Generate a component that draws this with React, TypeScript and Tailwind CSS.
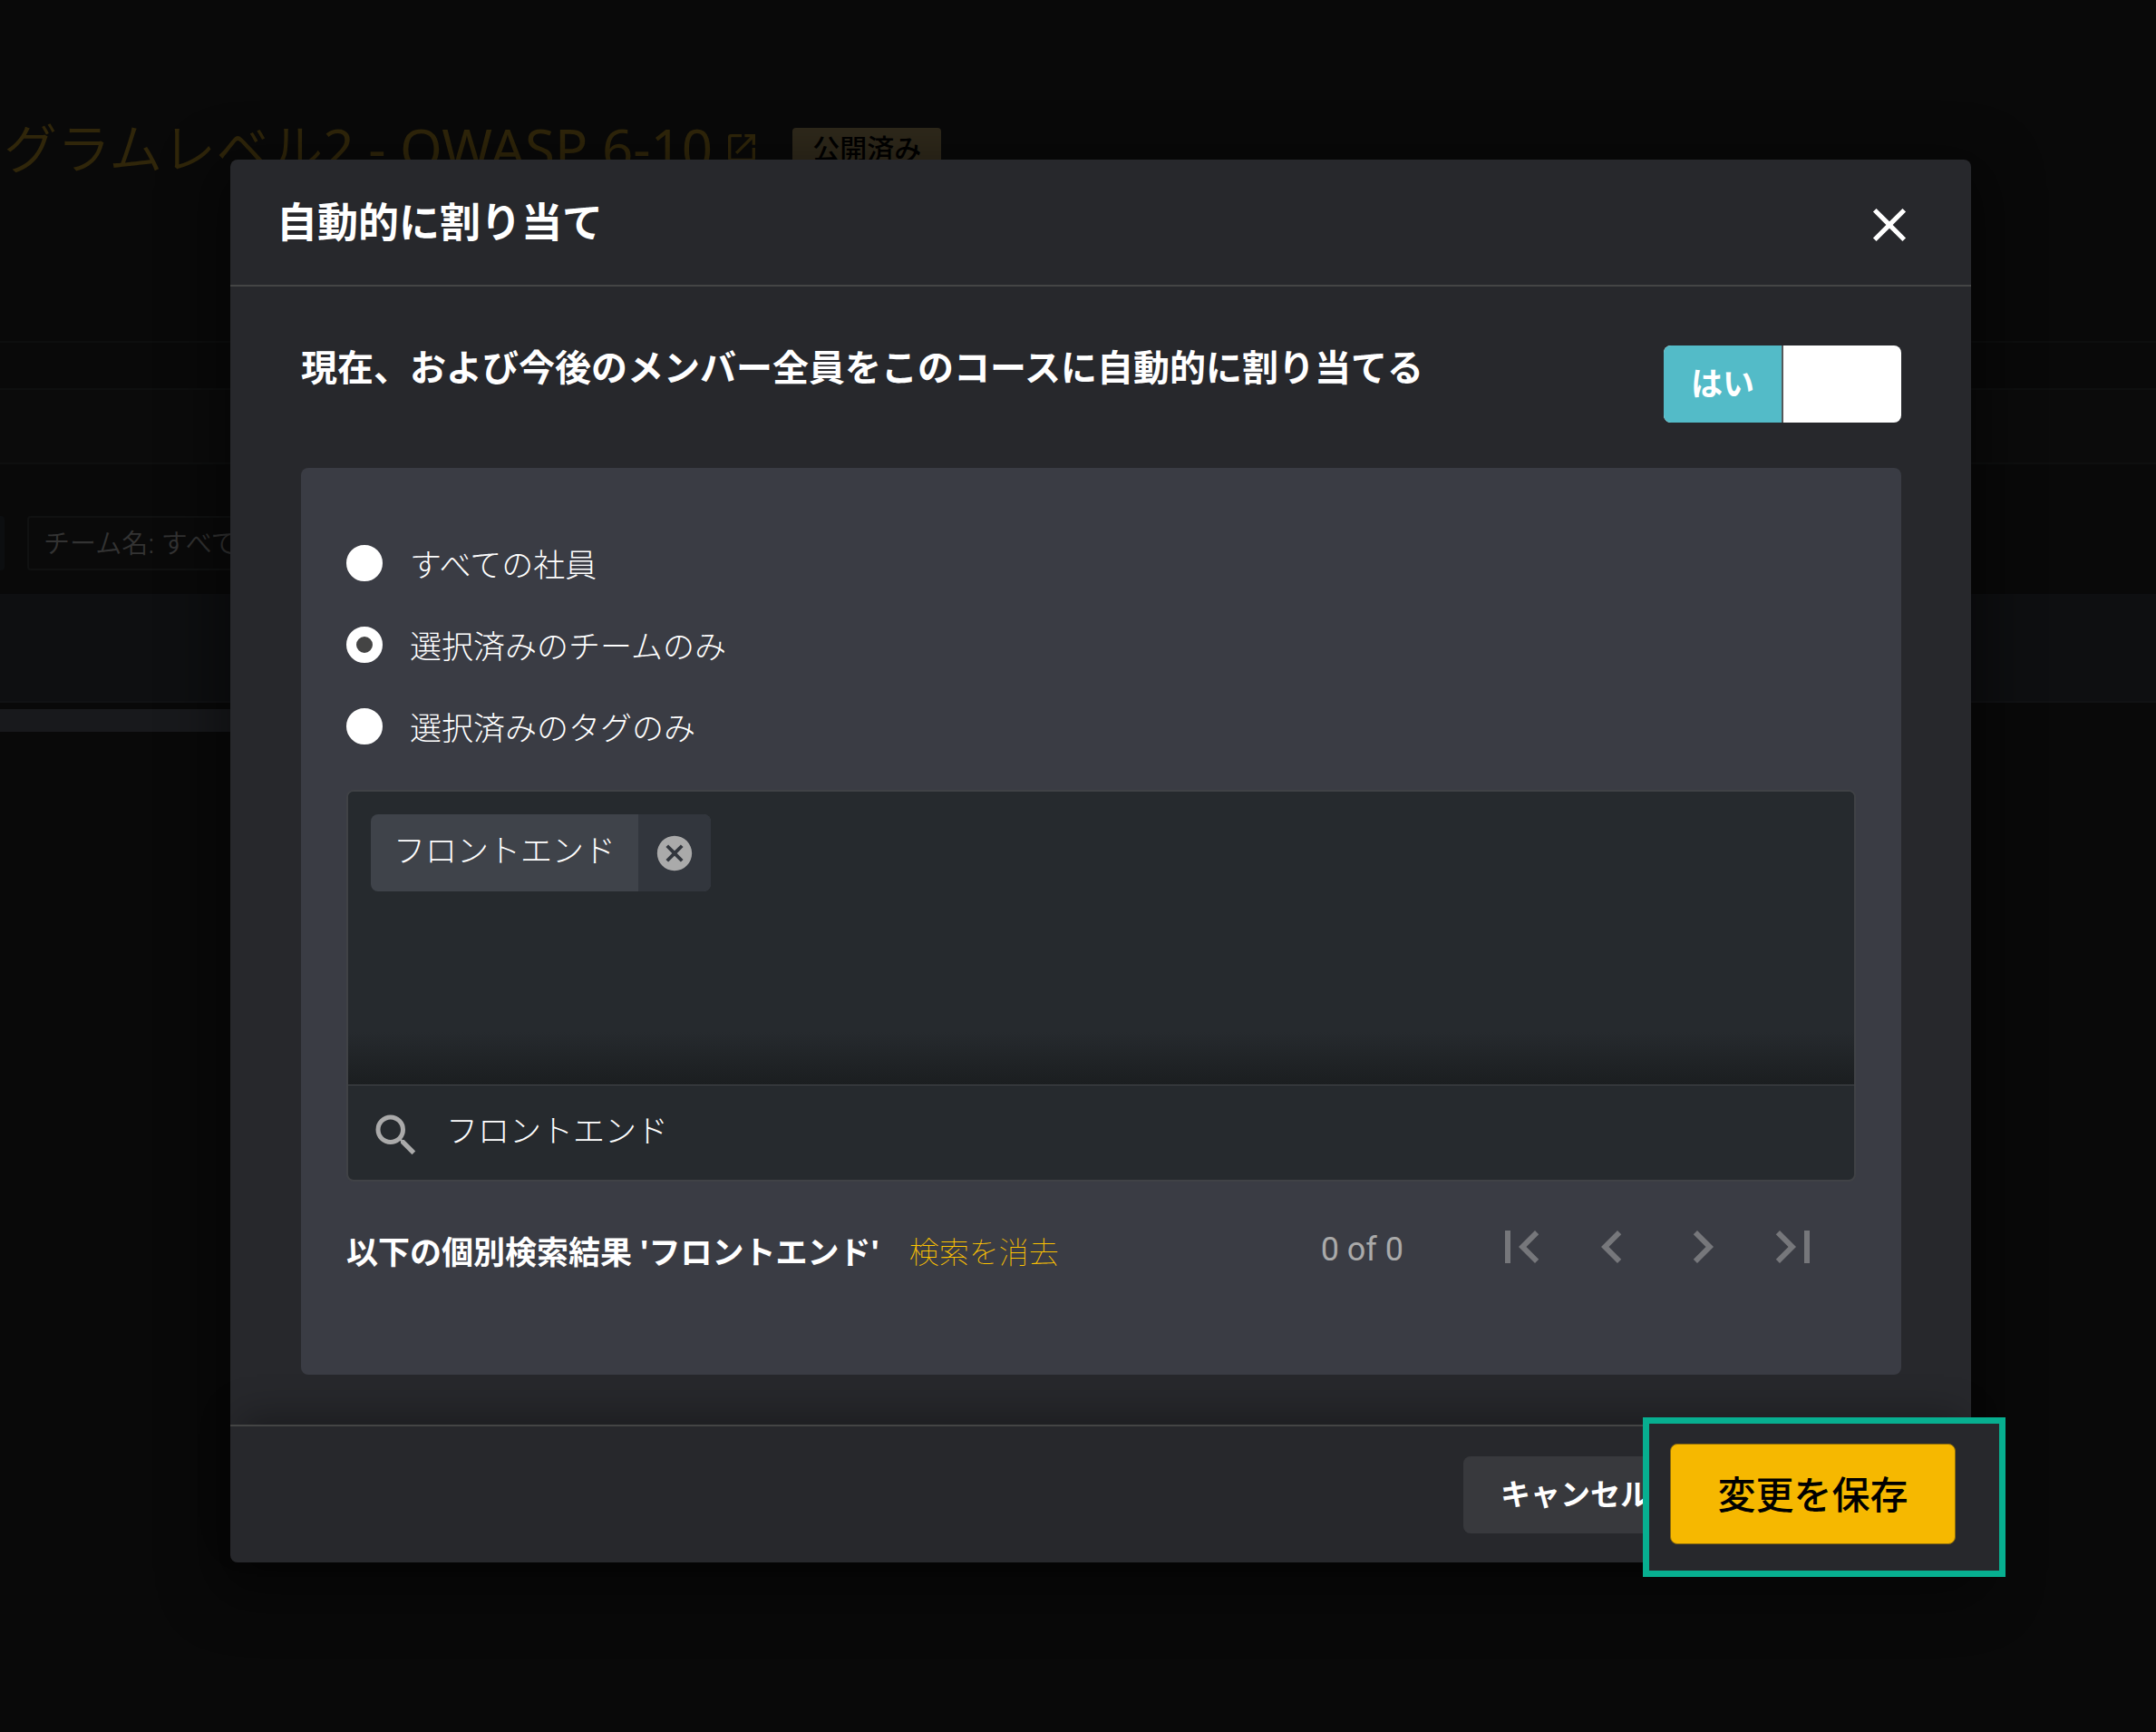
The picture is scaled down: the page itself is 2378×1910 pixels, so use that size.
import React, { useState } from 'react';
import {
  MdCancel,
  MdChevronLeft,
  MdChevronRight,
  MdClose,
  MdFirstPage,
  MdLastPage,
  MdOpenInNew,
  MdSearch,
} from 'react-icons/md';

const options = ['すべての社員', '選択済みのチームのみ', '選択済みのタグのみ'];

const pagerButtons = [
  { label: '最初のページ', Icon: MdFirstPage },
  { label: '前のページ', Icon: MdChevronLeft },
  { label: '次のページ', Icon: MdChevronRight },
  { label: '最後のページ', Icon: MdLastPage },
];

// the course page that sits dimmed behind the dialog
const CoursePage = () => (
  <div className="min-h-screen overflow-hidden bg-[#090909]">
    <div className="flex h-[376px] items-start pt-[120px] pl-1">
      <a href="#course" className="flex items-center text-[59px] leading-[86px] font-[350] whitespace-pre text-[#30260a]">
        グラムレベル<span className="text-[60px] font-normal">2 - OWASP 6-10</span>
        <MdOpenInNew className="ml-3 size-10" />
      </a>
      <span className="mt-[21px] ml-9 rounded bg-[#2f291b] px-[22px] py-1 text-[30px] leading-[38px] font-medium text-black">
        公開済み
      </span>
    </div>
    <div className="h-[52px] border-t-2 border-[#0d0e0e]" />
    <div className="h-[84px] border-y-2 border-[#0e0f0f] bg-[#0b0b0b]" />
    <div className="flex h-[143px] items-center gap-[25px] pt-[30px]">
      <div className="h-[60px] w-[5px] rounded-r bg-[#0c0e10]" />
      <button className="h-[60px] rounded border-2 border-[#101111] bg-[#0a0a0a] px-4 text-[29px] font-[350] text-[#333]">
        チーム名: すべて
      </button>
    </div>
    <div className="h-[120px] border-b-2 border-[#111214] bg-[#0e0f11]" />
    <div className="mt-[7px] h-[25px] w-1/2 bg-[#18191c]" />
  </div>
);

type RadioRowProps = {
  label: string;
  checked: boolean;
  onSelect: () => void;
};

const RadioRow = ({ label, checked, onSelect }: RadioRowProps) => (
  <label className="flex h-[90px] items-center gap-[30px] text-[35px] leading-[50px] font-light">
    <input
      type="radio"
      name="assign-to"
      checked={checked}
      onChange={onSelect}
      className="size-10 appearance-none rounded-full border-[11px] border-white bg-white checked:bg-[#444]"
    />
    <span className="pt-[3px]">{label}</span>
  </label>
);

const App = () => {
  const [enabled, setEnabled] = useState(true);
  const [selected, setSelected] = useState(1);
  const [query, setQuery] = useState('フロントエンド');

  return (
    <div lang="ja" className="relative font-['Noto_Sans','Noto_Sans_CJK_JP',sans-serif] text-white">
      <CoursePage />

      <div className="absolute inset-0 pt-[176px] pr-[204px] pl-[254px]">
        <div role="dialog" aria-labelledby="dialog-title" className="rounded-lg bg-[#27282c] shadow-[0_20px_60px_20px_rgba(0,0,0,0.4)]">
          <header className="flex h-[140px] items-center justify-between border-b-2 border-[#444545] pr-[59px] pl-[51px]">
            <h1 id="dialog-title" className="text-[45px] leading-[60px] font-bold">自動的に割り当て</h1>
            <button aria-label="閉じる" className="pt-[5px]">
              <MdClose className="size-[62px]" />
            </button>
          </header>

          <div className="pt-[65px] pr-[77px] pb-[55px] pl-[78px]">
            <div className="mb-[50px] flex items-start justify-between">
              <h2 className="text-[40px] leading-[48px] font-bold">
                現在、および今後のメンバー全員をこのコースに自動的に割り当てる
              </h2>
              <button
                role="switch"
                aria-checked={enabled}
                onClick={() => setEnabled(!enabled)}
                className="grid h-[85px] w-[262px] grid-cols-[132px_130px] overflow-hidden rounded-lg bg-white text-[35px] font-bold"
              >
                <span className="flex items-center justify-center border-r-2 border-[#55585a] bg-[#53bbc8]">はい</span>
              </button>
            </div>

            <section className="rounded-lg bg-[#3a3c44] px-[50px] pt-[60px] pb-[105px]">
              {options.map((option, i) => (
                <RadioRow key={option} label={option} checked={selected === i} onSelect={() => setSelected(i)} />
              ))}

              <div className="mt-[25px] overflow-hidden rounded-lg border-2 border-[#404246] bg-[#262a2e]">
                <div className="h-[323px] bg-linear-to-t from-[#1b1e20] to-[#262a2e] to-18% p-[25px]">
                  <div className="flex h-[85px] w-fit overflow-hidden rounded-lg bg-[#3f434a]">
                    <span className="flex items-center px-[25px] pb-1 text-[35px] font-light">フロントエンド</span>
                    <button aria-label="削除" className="flex w-20 items-center justify-center bg-[#32363d] text-[#aaa]">
                      <MdCancel className="size-[46px]" />
                    </button>
                  </div>
                </div>
                <label className="flex h-[105px] items-center gap-[25px] border-t border-[#44474b] pl-[23px]">
                  <MdSearch className="mt-[6px] size-[60px] text-[#aaa]" />
                  <input
                    aria-label="検索"
                    value={query}
                    onChange={(e) => setQuery(e.target.value)}
                    className="flex-1 bg-transparent pb-1 text-[35px] leading-[50px] font-light outline-none"
                  />
                </label>
              </div>

              <div className="mt-[36px] flex h-[72px] items-center">
                <p className="pt-3 text-[35px] leading-[50px] font-bold">以下の個別検索結果 'フロントエンド'</p>
                <a href="#clear" className="ml-[33px] pt-3 text-[33px] leading-[50px] font-thin text-[#ffc400]">検索を消去</a>
                <span className="mr-[94px] ml-auto pt-[6px] font-[Roboto] text-[36px] leading-[50px] text-[#aaa]">0 of 0</span>
                <nav className="mr-[33px] flex gap-7 text-[#76777b]">
                  {pagerButtons.map(({ label, Icon }) => (
                    <button key={label} aria-label={label}>
                      <Icon className="size-[72px]" />
                    </button>
                  ))}
                </nav>
              </div>
            </section>
          </div>

          <footer className="relative flex h-[152px] items-center justify-end border-t-2 border-[#444545] pr-[303px] shadow-[0_-20px_40px_-10px_rgba(0,0,0,0.3)]">
            <button className="h-[85px] w-[257px] rounded-lg bg-[#38393d] pl-[41px] text-left text-[33px] font-bold">キャンセル</button>
            {/* highlighted save action */}
            <div className="absolute -top-[10px] -right-[38px] h-[176px] w-[400px] border-[7px] border-[#07af90] bg-[#27282c] pt-[22px] pl-[23px]">
              <button className="h-[111px] w-[315px] rounded-lg border border-[#8d6c0b] bg-[#f6b800] text-[42px] font-medium text-black">
                変更を保存
              </button>
            </div>
          </footer>
        </div>
      </div>
    </div>
  );
};

export default App;
